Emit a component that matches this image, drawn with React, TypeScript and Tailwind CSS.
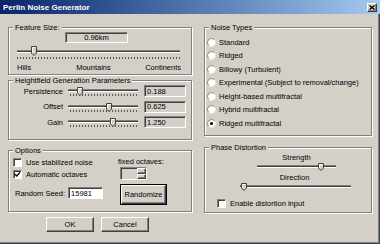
import React from 'react';

// classic win9x dialog palette
const FACE = 'bg-[#d4d0c8]';

const Group: React.FC<{ title: string; className?: string; children?: React.ReactNode }> = ({
  title,
  className = '',
  children,
}) => (
  <fieldset
    className={`w-full border border-[#808080] shadow-[inset_1px_1px_0_#fff,1px_1px_0_#fff] ${className}`}
  >
    <legend className={`ml-[4px] px-[2px] leading-[9px] ${FACE}`}>{title}</legend>
    {children}
  </fieldset>
);

const Field: React.FC<{ className?: string; children?: React.ReactNode }> = ({ className = '', children }) => (
  <div
    className={`border border-t-[#808080] border-l-[#808080] border-b-white border-r-white shadow-[inset_1px_1px_0_#404040] ${className}`}
  >
    {children}
  </div>
);

const Button: React.FC<{ className?: string; children?: React.ReactNode }> = ({ className = '', children }) => (
  <div
    className={`flex items-center justify-center border border-t-white border-l-white border-b-[#404040] border-r-[#404040] shadow-[inset_-1px_-1px_0_#808080] ${FACE} ${className}`}
  >
    {children}
  </div>
);

const Thumb: React.FC<{ h?: number }> = ({ h = 9 }) => (
  <svg width="6" height={h} viewBox={`0 0 6 ${h}`}>
    <path d={`M0.5 0.5H5.5V${h - 3}L3 ${h - 0.5}L0.5 ${h - 3}Z`} fill="#d4d0c8" stroke="#404040" />
    <path d={`M1.5 ${h - 3}V1.5H4.5`} stroke="#fff" fill="none" />
  </svg>
);

const Track = () => <div className="h-[3px] border-t border-t-[#808080] border-b border-b-white bg-[#404040]" />;

const Ticks: React.FC<{ className?: string }> = ({ className = '' }) => (
  <div
    className={`h-[2px] bg-[image:repeating-linear-gradient(90deg,#555_0px,#555_1px,transparent_1px,transparent_3px)] ${className}`}
  />
);

const Check: React.FC<{ checked?: boolean }> = ({ checked }) => (
  <div className="flex h-[9px] w-[9px] shrink-0 items-center justify-center border border-t-[#808080] border-l-[#808080] border-b-white border-r-white bg-white shadow-[inset_1px_1px_0_#404040]">
    {checked && (
      <svg width="7" height="7" viewBox="0 0 7 7">
        <path d="M1 3.2L2.8 5L6 1.4" stroke="#000" strokeWidth="1.4" fill="none" />
      </svg>
    )}
  </div>
);

const Radio: React.FC<{ checked?: boolean }> = ({ checked }) => (
  <svg width="9" height="9" viewBox="0 0 9 9" className="shrink-0">
    <circle cx="4.5" cy="4.5" r="4" fill="#fff" />
    <path d="M1.67 7.33A4 4 0 0 1 7.33 1.67" stroke="#808080" fill="none" />
    <path d="M7.33 1.67A4 4 0 0 1 1.67 7.33" stroke="#e8e6e0" fill="none" />
    {checked && <circle cx="4.5" cy="4.5" r="1.6" fill="#000" />}
  </svg>
);

const noiseTypes = [
  'Standard',
  'Ridged',
  'Billowy (Turbulent)',
  'Experimental (Subject to removal/change)',
  'Height-based multifractal',
  'Hybrid multifractal',
  'Ridged multifractal',
];

const params = [
  { label: 'Persistence', value: '0.188', thumb: 'left-[9px]' },
  { label: 'Offset', value: '0.625', thumb: 'left-[38px]' },
  { label: 'Gain', value: '1.250', thumb: 'left-[42px]' },
];

export default function App() {
  return (
    <div
      className={`flex h-[244px] w-[380px] flex-col overflow-hidden text-[7.5px] leading-[9px] text-black font-['Liberation_Sans',Arial,sans-serif] shadow-[inset_-1px_-1px_0_#404040,inset_-2px_-2px_0_#808080] ${FACE}`}
    >
      {/* Title bar */}
      <div className="flex h-[14px] shrink-0 items-center bg-linear-to-r from-[#0a246a] to-[#a6caf0] pl-[3px] pr-[3px]">
        <span className="text-[8px] font-bold text-white">Perlin Noise Generator</span>
        <Button className="ml-auto h-[9px] w-[10px]">
          <svg width="6" height="5" viewBox="0 0 6 5">
            <path d="M0.5 0.5L5.5 4.5M5.5 0.5L0.5 4.5" stroke="#000" strokeWidth="1.3" />
          </svg>
        </Button>
      </div>

      <div className="flex pl-[8px] pt-[9px]">
        {/* Left column */}
        <div className="flex w-[184px] flex-col">
          <Group title="Feature Size:" className="pb-[2px]">
            <Field className={`ml-[56px] flex h-[11px] w-[63px] items-center justify-center ${FACE}`}>0.96km</Field>
            <div className="relative ml-[8px] mt-[3px] h-[14px] w-[163px]">
              <div className="pt-[4px]">
                <Track />
              </div>
              <Ticks className="mt-[4px]" />
              <div className="absolute left-[14px] top-0">
                <Thumb h={10} />
              </div>
            </div>
            <div className="mt-[3px] flex">
              <span className="ml-[8px]">Hills</span>
              <span className="ml-[45px]">Mountains</span>
              <span className="ml-auto mr-[10px]">Continents</span>
            </div>
          </Group>

          <Group title="Heightfield Generation Parameters" className="mt-[1px] pb-[9px]">
            <div className="-mt-[2px] flex flex-col">
              {params.map((p, i) => (
                <div key={p.label} className={`flex items-center ${i === 1 ? 'h-[15px]' : 'h-[16px]'}`}>
                  <span className="w-[54px] text-right">{p.label}</span>
                  <div className="relative ml-[5px] h-[12px] w-[70px]">
                    <div className="pt-[4px]">
                      <Track />
                    </div>
                    <Ticks className="ml-[2px] mr-[1px] mt-[2px]" />
                    <div className={`absolute top-[2px] ${p.thumb}`}>
                      <Thumb />
                    </div>
                  </div>
                  <Field className={`ml-[6px] flex h-[12px] w-[42px] items-center pl-[2px] ${FACE}`}>{p.value}</Field>
                </div>
              ))}
            </div>
          </Group>

          <Group title="Options" className="mt-[6px] pb-[6px]">
            <div className="flex">
              <div className="flex w-[111px] flex-col">
                <div className="mt-[1px] flex h-[12px] items-center gap-[4px] pl-[4px]">
                  <Check />
                  <span>Use stabilized noise</span>
                </div>
                <div className="flex h-[12px] items-center gap-[4px] pl-[4px]">
                  <Check checked />
                  <span>Automatic octaves</span>
                </div>
                <div className="mt-[7px] flex h-[12px] items-center">
                  <span className="ml-[6px]">Random Seed:</span>
                  <Field className="ml-[3px] flex h-[12px] w-[35px] items-center bg-white pl-[2px]">15981</Field>
                </div>
              </div>
              <div className="flex flex-col">
                <span className="-ml-[2px] mt-[1.5px]">fixed octaves:</span>
                <Field className={`mt-[1.5px] flex h-[13px] w-[27px] justify-end ${FACE}`}>
                  <div className="flex w-[9px] flex-col">
                    <Button className="h-[5.5px] w-[9px]" />
                    <Button className="h-[5.5px] w-[9px]" />
                  </div>
                </Field>
                <div className="mt-[4px] h-[21px] w-[47px] border border-black">
                  <Button className="h-full w-full">Randomize</Button>
                </div>
              </div>
            </div>
          </Group>

          <div className="mt-[5px] flex">
            <Button className="ml-[38px] h-[15px] w-[48px]">OK</Button>
            <Button className="ml-[7px] h-[15px] w-[48px]">Cancel</Button>
          </div>
        </div>

        {/* Right column */}
        <div className="ml-[12px] flex w-[168px] flex-col">
          <Group title="Noise Types" className="pb-[5px]">
            <div className="mt-[3.25px] flex flex-col pl-[2px]">
              {noiseTypes.map((t, i) => (
                <div key={t} className="flex h-[13.5px] items-center gap-[3px]">
                  <Radio checked={i === noiseTypes.length - 1} />
                  <span>{t}</span>
                </div>
              ))}
            </div>
          </Group>

          <Group title="Phase Distortion" className="mt-[7px] pb-[4px]">
            <div className="mt-[1px] pl-[17px] text-center">Strength</div>
            <div className="relative ml-[52px] mt-[1.5px] h-[8px] w-[79px]">
              <div className="pt-[2px]">
                <Track />
              </div>
              <div className="absolute left-[61px] top-0">
                <Thumb h={8} />
              </div>
            </div>
            <div className="mt-[1.5px] pl-[13px] text-center">Direction</div>
            <div className="relative ml-[35px] mt-[1.5px] h-[8px] w-[111px]">
              <div className="pt-[2px]">
                <Track />
              </div>
              <div className="absolute left-[1px] top-0">
                <Thumb h={8} />
              </div>
            </div>
            <div className="ml-[12px] mt-[8px] flex h-[9px] items-center gap-[4px]">
              <Check />
              <span>Enable distortion input</span>
            </div>
          </Group>
        </div>
      </div>
    </div>
  );
}
